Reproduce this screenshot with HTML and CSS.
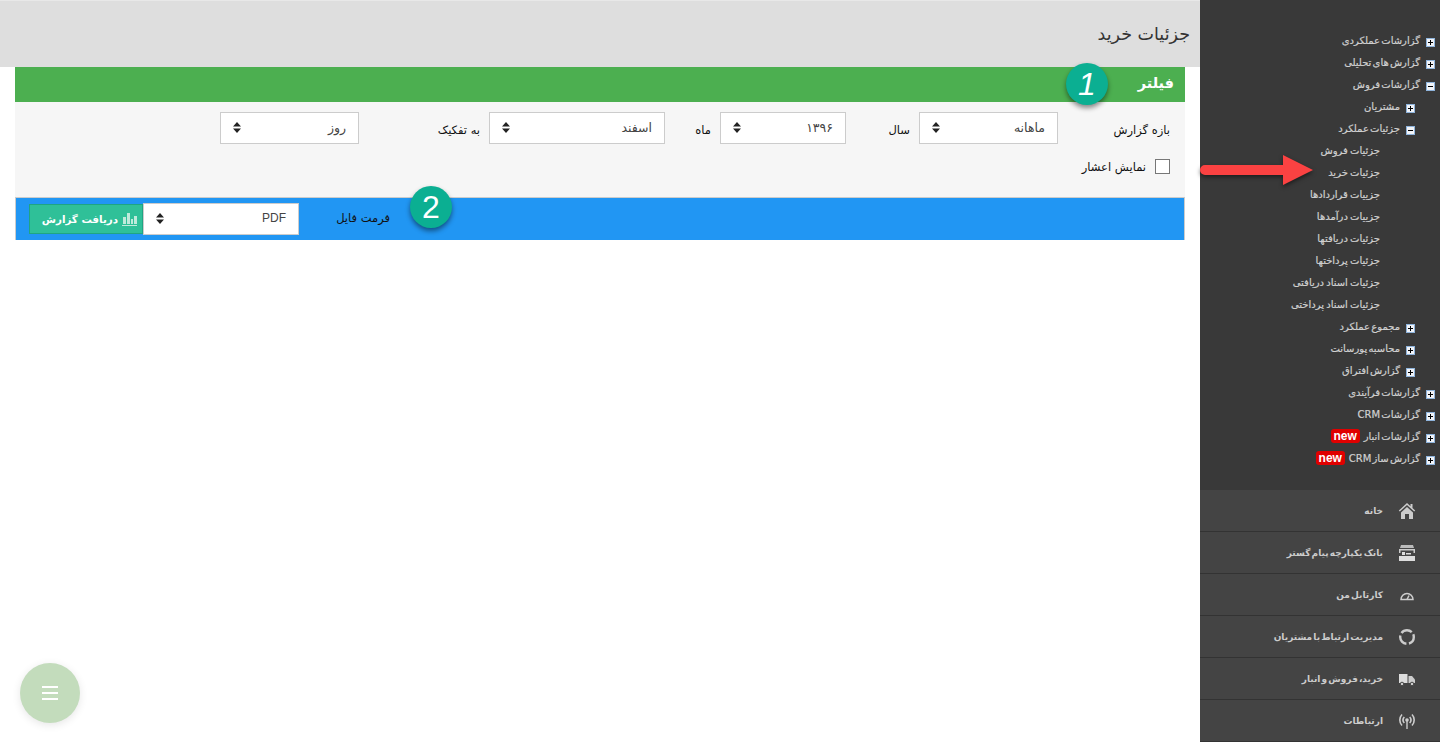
FILE: index.html
```html
<!DOCTYPE html>
<html lang="fa" dir="rtl">
<head>
<meta charset="utf-8">
<title>جزئیات خرید</title>
<link rel="stylesheet" href="styles.css">
</head>
<body>
<aside class="sidebar">
  <ul class="tree">
    <li class="node l1"><span class="tg plus"></span><span>گزارشات عملکردی</span></li>
    <li class="node l1"><span class="tg plus"></span><span>گزارش های تحلیلی</span></li>
    <li class="node l1"><span class="tg"></span><span>گزارشات فروش</span></li>
    <li class="node l2"><span class="tg plus"></span><span>مشتریان</span></li>
    <li class="node l2"><span class="tg"></span><span>جزئیات عملکرد</span></li>
    <li class="node l3"><span>جزئیات فروش</span></li>
    <li class="node l3"><span>جزئیات خرید</span></li>
    <li class="node l3"><span>جزییات قراردادها</span></li>
    <li class="node l3"><span>جزییات درآمدها</span></li>
    <li class="node l3"><span>جزئیات دریافتها</span></li>
    <li class="node l3"><span>جزئیات پرداختها</span></li>
    <li class="node l3"><span>جزئیات اسناد دریافتی</span></li>
    <li class="node l3"><span>جزئیات اسناد پرداختی</span></li>
    <li class="node l2"><span class="tg plus"></span><span>مجموع عملکرد</span></li>
    <li class="node l2"><span class="tg plus"></span><span>محاسبه پورسانت</span></li>
    <li class="node l2"><span class="tg plus"></span><span>گزارش افتراق</span></li>
    <li class="node l1"><span class="tg plus"></span><span>گزارشات فرآیندی</span></li>
    <li class="node l1"><span class="tg plus"></span><span>گزارشات CRM</span></li>
    <li class="node l1"><span class="tg plus"></span><span>گزارشات انبار</span><b class="new">new</b></li>
    <li class="node l1"><span class="tg plus"></span><span>گزارش ساز CRM</span><b class="new">new</b></li>
  </ul>
  <svg class="arrow" width="116" height="34" viewBox="0 0 116 34"><path d="M5 10H83V0L113 15 83 30V20H5a5 5 0 0 1 0-10z" fill="#fb4242"/></svg>
  <nav class="menu">
    <a class="item"><svg class="ic" viewBox="0 0 18 18" width="18" height="18"><path d="M9 1 .8 8.600l1 1L9 3l7.200 6.600 1-1L14.500 6V2h-2v2.200z" fill="#ccc"/><path d="M3 10.500 9 5l6 5.500V17h-4v-5H7v5H3z" fill="#ccc"/></svg><span>خانه</span></a>
    <a class="item"><svg class="ic" viewBox="0 0 18 18" width="18" height="18"><path d="M3 1h12l1 3H2z" fill="#bbb"/><path d="M1 5h16v4H1z" fill="#ccc"/><path d="M2.500 6.500h13V12h-13z" fill="#444"/><path d="M4 8h3v3H4zM8 9h5v1.500H8z" fill="#ddd"/><path d="M1 12h16v5H1z" fill="#ddd"/></svg><span>بانک یکپارچه پیام گستر</span></a>
    <a class="item"><svg class="ic" viewBox="0 0 18 18" width="18" height="18"><path d="M3 13.500a6 6 0 1 1 12 0z" fill="none" stroke="#ccc" stroke-width="1.500"/><path d="M9 13.500l2-4" stroke="#ccc" stroke-width="1.500"/></svg><span>کارتابل من</span></a>
    <a class="item"><svg class="ic" viewBox="0 0 18 18" width="18" height="18"><circle cx="9" cy="9" r="6.800" fill="none" stroke="#ccc" stroke-width="2.400" stroke-dasharray="11.600 2.640" stroke-dashoffset="3"/></svg><span>مدیریت ارتباط با مشتریان</span></a>
    <a class="item"><svg class="ic" viewBox="0 0 18 18" width="18" height="18"><path d="M1 4h8.500v9H1z" fill="#ddd"/><path d="M10.500 6h3.500l3 3.500V13h-6.500z" fill="#ccc"/><circle cx="4" cy="14" r="1.800" fill="#ccc" stroke="#444"/><circle cx="14" cy="14" r="1.800" fill="#ccc" stroke="#444"/></svg><span>خرید، فروش و انبار</span></a>
    <a class="item"><svg class="ic" viewBox="0 0 18 18" width="18" height="18"><g fill="none" stroke="#ccc" stroke-width="1.600"><path d="M4 2.500a8 8 0 0 0 0 11"/><path d="M14 2.500a8 8 0 0 1 0 11"/><path d="M6.300 5a4.500 4.500 0 0 0 0 6"/><path d="M11.700 5a4.500 4.500 0 0 1 0 6"/></g><circle cx="9" cy="8" r="1.800" fill="#ccc"/><path d="M8.300 9h1.400v8H8.300z" fill="#ccc"/></svg><span>ارتباطات</span></a>
  </nav>
</aside>

<main class="main">
  <header class="page-head"><h1>جزئیات خرید</h1></header>
  <section class="panel">
    <div class="panel-title">فیلتر</div>
    <span class="step step-1">1</span>
    <div class="filters">
      <div class="row">
        <label class="lbl w112">بازه گزارش</label>
        <div class="sel w139"><span>ماهانه</span><svg class="updown" width="8" height="11" viewBox="0 0 8 11"><path d="M4 0 8 4.500H0zM0 6.500h8L4 11z" fill="#222"/></svg></div>
        <label class="lbl w73 pad">سال</label>
        <div class="sel w126"><span class="digits">۱۳۹۶</span><svg class="updown" width="8" height="11" viewBox="0 0 8 11"><path d="M4 0 8 4.500H0zM0 6.500h8L4 11z" fill="#222"/></svg></div>
        <label class="lbl w55 pad">ماه</label>
        <div class="sel w176"><span>اسفند</span><svg class="updown" width="8" height="11" viewBox="0 0 8 11"><path d="M4 0 8 4.500H0zM0 6.500h8L4 11z" fill="#222"/></svg></div>
        <label class="lbl w130 pad">به تفکیک</label>
        <div class="sel w139"><span>روز</span><svg class="updown" width="8" height="11" viewBox="0 0 8 11"><path d="M4 0 8 4.500H0zM0 6.500h8L4 11z" fill="#222"/></svg></div>
      </div>
      <div class="check-row"><span class="box"></span><span>نمایش اعشار</span></div>
    </div>
    <div class="action-bar">
      <label class="file-lbl">فرمت فایل</label>
      <span class="step step-2">2</span>
      <div class="sel file-sel"><span>PDF</span><svg class="updown" width="8" height="11" viewBox="0 0 8 11"><path d="M4 0 8 4.500H0zM0 6.500h8L4 11z" fill="#222"/></svg></div>
      <button class="btn"><svg width="15" height="14" viewBox="0 0 15 14"><path d="M0 13h15v1H0zM1 5h3v7H1zM5 1h3v11H5zM9 7h2v5H9zM12 4h3v8h-3z" fill="#bfeadb"/></svg><span>دریافت گزارش</span></button>
    </div>
  </section>
  <button class="fab" aria-label="menu"><i></i><i></i><i></i></button>
</main>
</body>
</html>
```
FILE: styles.css
```css
* { box-sizing: border-box; }
html, body { margin: 0; height: 100%; }
body {
  display: flex;
  width: 1440px;
  height: 742px;
  overflow: hidden;
  background: #fff;
  font-family: "DejaVu Sans", sans-serif;
  font-size: 10px;
  color: #222;
}
.sidebar {
  position: relative;
  width: 240px;
  flex: none;
  display: flex;
  flex-direction: column;
  background: #393939;
}
.tree {
  list-style: none;
  margin: 0;
  padding: 30px 0 0;
  height: 490px;
}
.node {
  display: flex;
  align-items: center;
  height: 22px;
  padding-bottom: 2px;
  color: #d0d0d0;
  font-size: 10px;
  word-spacing: -2px;
  -webkit-text-stroke: .2px #d0d0d0;
  white-space: nowrap;
}
.l1 { padding-right: 5px; }
.l2 { padding-right: 25px; }
.l3 { padding-right: 60px; word-spacing: -1px; }
.tg {
  flex: none;
  width: 9px;
  height: 9px;
  margin: 4px 0 0 6px;
  border: 1px solid #8fb4dc;
  background:
    linear-gradient(#000, #000) center / 5px 1px no-repeat,
    #f2f4f8;
}
.tg.plus {
  background:
    linear-gradient(#000, #000) center / 5px 1px no-repeat,
    linear-gradient(#000, #000) center / 1px 5px no-repeat,
    #f2f4f8;
}
.new {
  margin-right: 4px;
  width: 29px;
  height: 14px;
  border-radius: 3px;
  background: #e00000;
  color: #fff;
  font: bold 12px/14px "Liberation Sans", sans-serif;
  text-align: center;
  word-spacing: 0;
  -webkit-text-stroke: 0;
}
.arrow {
  position: absolute;
  left: 0;
  top: 155px;
  filter: drop-shadow(0 2px 2px rgba(0,0,0,.5));
}
.menu { flex: 1; background: #444; }
.item {
  display: flex;
  align-items: center;
  height: 42px;
  padding-right: 24px;
  border-bottom: 1px solid #333;
  color: #ccc;
  font-size: 9px;
  font-weight: bold;
  word-spacing: -2px;
  white-space: nowrap;
}
.ic { flex: none; margin-left: 15px; }

.main { position: relative; flex: 1; }
.page-head {
  height: 67px;
  background: #dedede;
  border-top: 1px solid #e8e8e8;
  padding: 23px 10px 0 0;
}
h1 { margin: 0; font-size: 17.500px; font-weight: normal; line-height: 20px; color: #333; }
.panel { position: relative; margin: 0 15px; }
.panel-title {
  height: 35px;
  padding-right: 11px;
  background: #4caf50;
  color: #fff;
  font-size: 14.500px;
  font-weight: bold;
  line-height: 32px;
}
.step {
  position: absolute;
  width: 42px;
  height: 42px;
  border-radius: 50%;
  background: #0baf92;
  color: #fff;
  font: 32px/42px "Liberation Sans", sans-serif;
  text-align: center;
  box-shadow: 0 3px 5px rgba(0,0,0,.45);
}
.step-1 { top: -4px; right: 77px; font-style: italic; }
.step-2 { top: -12px; right: 732px; }
.filters { height: 95px; background: #f6f6f6; padding: 10px 15px 0; }
.row { display: flex; align-items: flex-start; }
.lbl { height: 32px; line-height: 36px; font-size: 11.500px; color: #111; white-space: nowrap; }
.pad { padding-right: 9px; }
.w112 { width: 112px; }
.w73 { width: 73px; }
.w55 { width: 55px; }
.w130 { width: 130px; }
.w139 { width: 139px; }
.w126 { width: 126px; }
.w176 { width: 176px; }
.sel {
  display: flex;
  align-items: center;
  justify-content: space-between;
  height: 32px;
  padding: 0 12px 2px 12px;
  background: #fff;
  border: 1px solid #ccc;
  font-size: 12.500px;
  color: #444;
}
.digits { letter-spacing: 2px; }
.updown { flex: none; }
.check-row { display: flex; align-items: center; gap: 9px; margin-top: 15px; font-size: 11.500px; color: #111; }
.box { width: 15px; height: 15px; background: #fff; border: 1px solid #777; }
.action-bar {
  position: relative;
  display: flex;
  align-items: center;
  height: 43px;
  padding: 0 0 0 13px;
  background: #2196f3;
  border: 1px solid #ccc;
  border-bottom: 0;
}
.file-lbl { margin: 0 794px 3px 0; width: 55px; flex: none; font-size: 11.500px; color: #111; white-space: nowrap; }
.file-sel { width: 156px; margin-right: 36px; flex: none; font-family: "Liberation Sans", sans-serif; font-size: 12px; }
.btn {
  display: flex;
  align-items: center;
  gap: 4px;
  width: 114px;
  height: 30px;
  padding: 0 5px;
  flex: none;
  background: #2fc098;
  border: 1px solid #1fa583;
  color: #fff;
  font: bold 10.300px "DejaVu Sans", sans-serif;
  white-space: nowrap;
}
.fab {
  position: absolute;
  left: 20px;
  top: 663px;
  display: flex;
  flex-direction: column;
  align-items: center;
  justify-content: center;
  gap: 4px;
  width: 60px;
  height: 60px;
  padding: 0;
  border: 0;
  border-radius: 50%;
  background: #c3dcbc;
  box-shadow: 0 2px 8px rgba(0,0,0,.1);
}
.fab i { display: block; width: 16px; height: 2px; background: #fff; }
```
